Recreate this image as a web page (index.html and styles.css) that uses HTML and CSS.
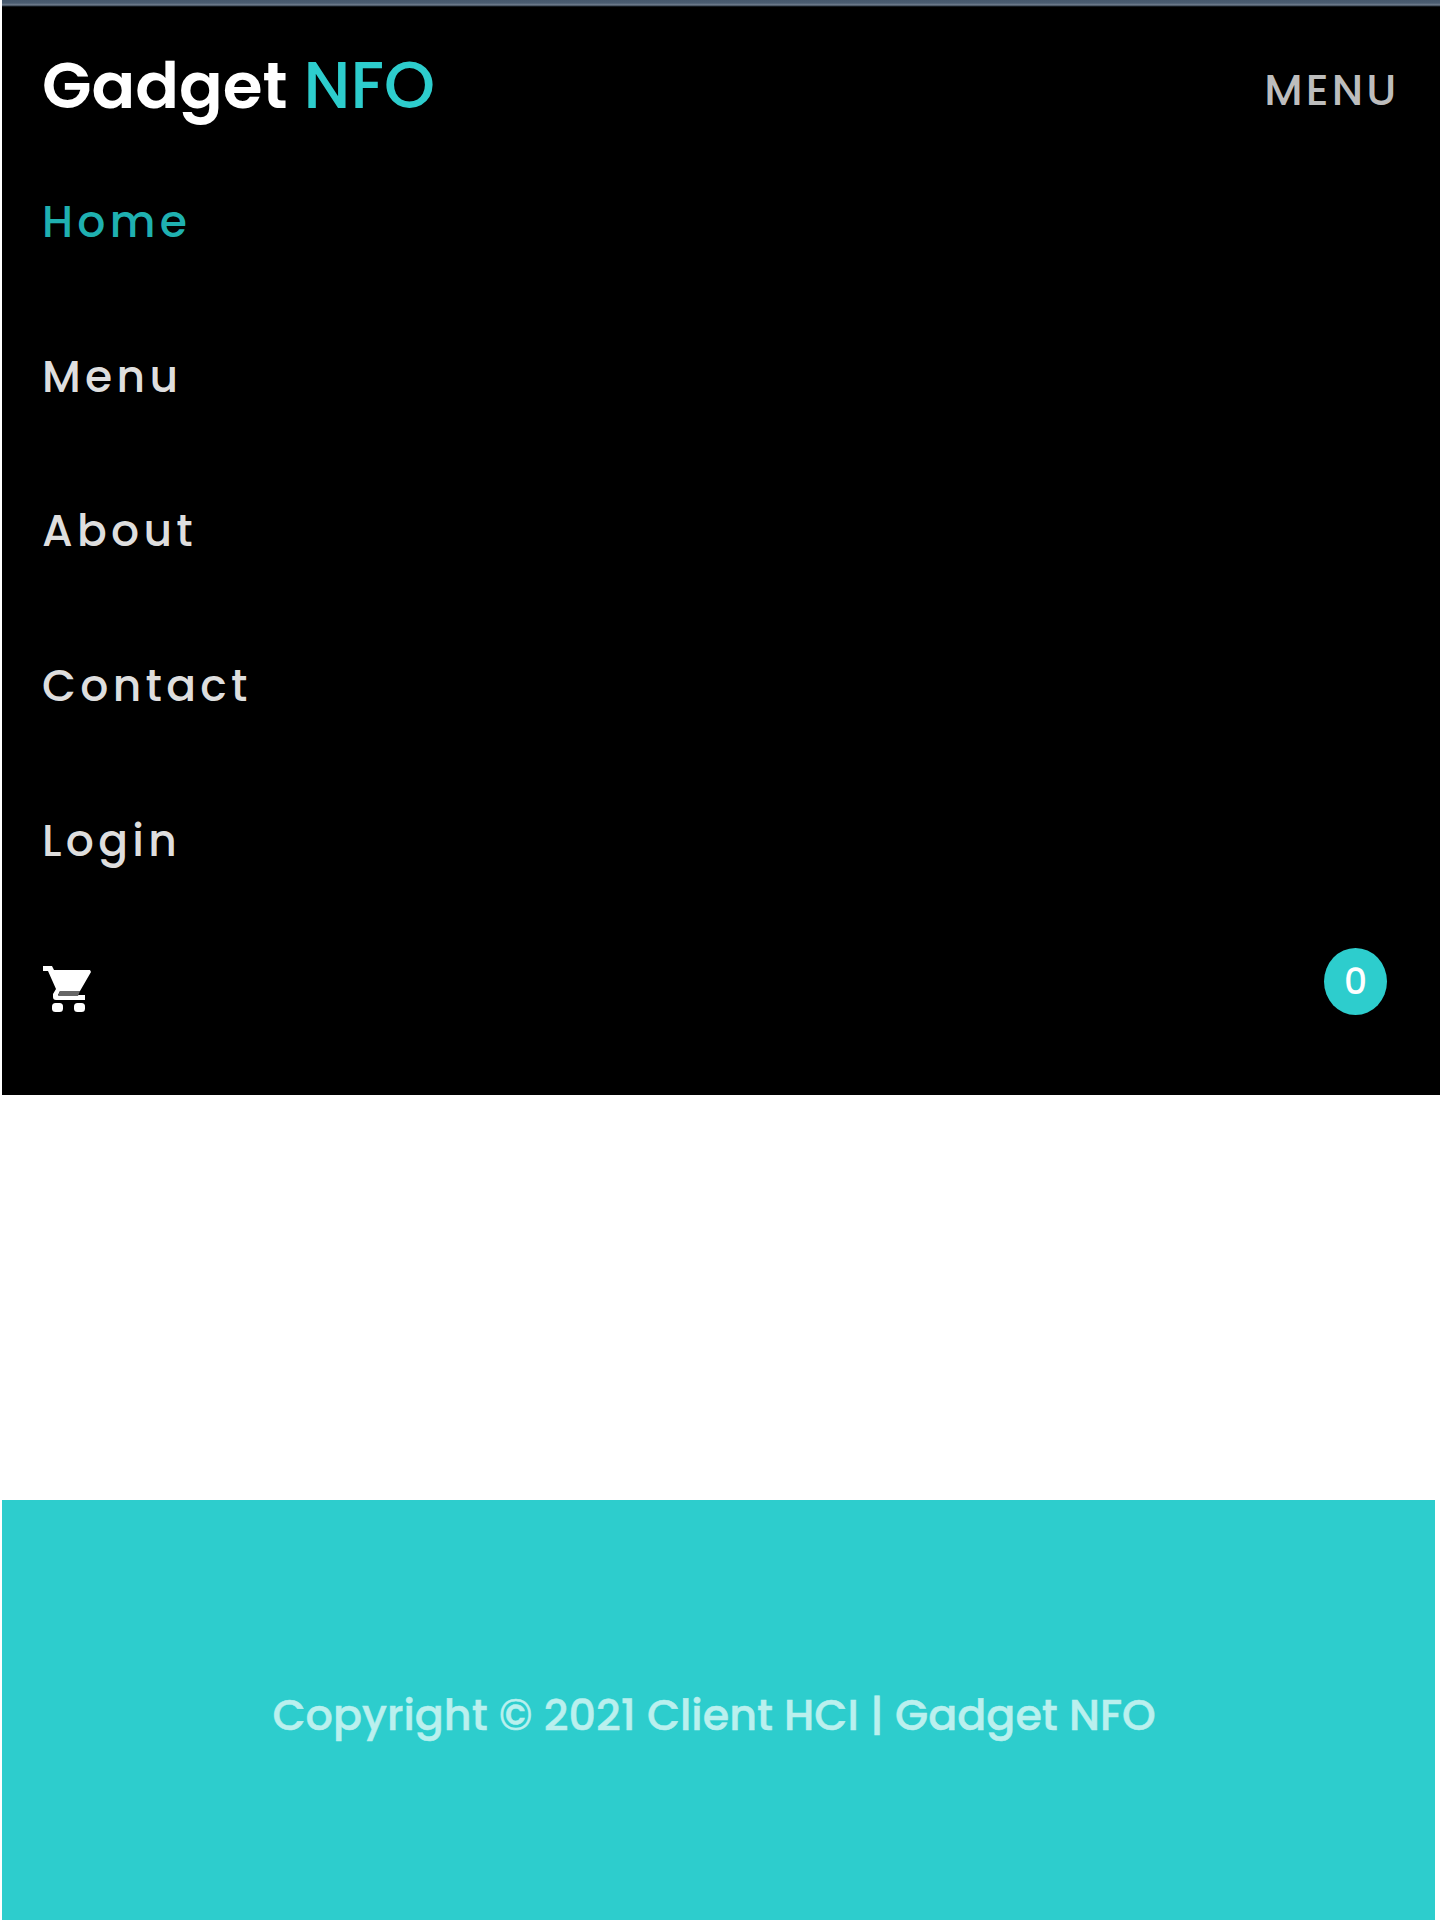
FILE: index.html
```html
<!DOCTYPE html>
<html lang="en">
<head>
<meta charset="utf-8">
<title>Gadget NFO</title>
<link rel="stylesheet" href="styles.css">
</head>
<body>
<header class="header">
  <div class="topbar">
    <a class="brand"><span class="brand-name">Gadget</span><span class="brand-accent">NFO</span></a>
    <span class="toggle">MENU</span>
  </div>
  <nav class="nav">
    <a class="nav-link active">Home</a>
    <a class="nav-link">Menu</a>
    <a class="nav-link">About</a>
    <a class="nav-link">Contact</a>
    <a class="nav-link">Login</a>
    <a class="nav-link cart">
      <svg class="cart-icon" viewBox="0 0 49 47" width="49" height="47">
        <path fill="#fff" d="M1 0H10L12 4H48L49 6L38 25H18L16 29H43V34H14Q11 34 11 31V28L14 23L6 5H1Z"/>
        <path fill="#666" d="M18 25H38L36 30H16Z"/>
        <rect fill="#fff" x="10" y="37" width="11" height="9" rx="3.500"/>
        <rect fill="#fff" x="32" y="37" width="11" height="9" rx="3.500"/>
      </svg>
      <span class="badge">0</span>
    </a>
  </nav>
</header>
<main class="content"></main>
<footer class="footer"><p class="copyright">Copyright © 2021 Client HCI | Gadget NFO</p></footer>
</body>
</html>
```
FILE: styles.css
```css
* { box-sizing: border-box; }
body {
  margin: 0;
  height: 1920px;
  display: flex;
  flex-direction: column;
  background: #fff;
  font-family: Poppins, Inter, "Open Sans", sans-serif;
}
.header {
  height: 1095px;
  margin-left: 2px;
  background: linear-gradient(#46586c 0, #4a5c70 3px, #748191 5px, #26313d 6px, #000 7px);
  padding-top: 6px;
}
.topbar {
  height: 138px;
  padding: 0 40.5px 0 40px;
  display: flex;
  align-items: center;
  justify-content: space-between;
}
.brand { display: flex; gap: 16px; font-size: 64.5px; line-height: 80px; padding-top: 22px; font-weight: 600; color: #fff; }
.brand-accent { color: #2dcdcd; font-size: 65px; font-weight: 500; }
.toggle { font-size: 43.5px; font-weight: 500; letter-spacing: 3.2px; color: #bdbdbd; padding-top: 28px; }
.nav { padding: 0 53px 0 40px; }
.nav-link {
  height: 154.75px;
  display: flex;
  align-items: center;
  font-size: 44px;
  font-weight: 500;
  color: #dedede;
  letter-spacing: 4.3px;
}
.active { color: #1fb0b0; }
.cart { justify-content: space-between; }
.cart-icon { margin-bottom: 12px; }
.badge {
  width: 63px;
  height: 67px;
  border-radius: 50%;
  margin-bottom: 28px;
  background: #2dcdcd;
  color: #fff;
  font-size: 36px;
  letter-spacing: 0;
  display: flex;
  align-items: center;
  justify-content: center;
}
.content { height: 405px; }
.footer {
  height: 420px;
  margin: 0 5px 0 2px;
  background: #2dcdcd;
  display: flex;
  justify-content: center;
}
.copyright {
  margin: 190px 9px 0 0;
  line-height: 50px;
  font-size: 42.9px;
  font-weight: 500;
  color: #baf0ee;
  -webkit-text-stroke: 0.5px #baf0ee;
  white-space: nowrap;
}
```
